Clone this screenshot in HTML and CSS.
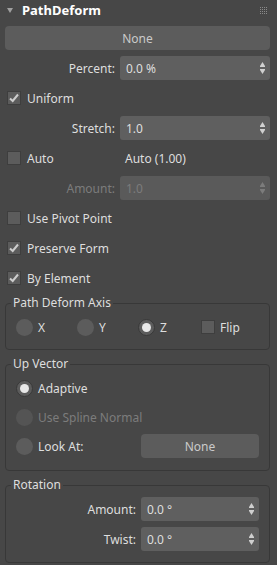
FILE: index.html
```html
<!DOCTYPE html>
<html lang="en">

<head>
    <meta charset="UTF-8">
    <meta name="viewport" content="width=device-width, initial-scale=1.0">
    <title>PathDeform</title>
    <link rel="stylesheet" href="styles.css">
</head>

<body>
    <div class="rollout">
        <div class="rollout-head">
            <span class="caret"></span>
            <span class="rollout-title">PathDeform</span>
            <svg class="grip" width="7" height="7" viewBox="0 0 7 7">
                <defs>
                    <pattern id="dots" width="2" height="2" patternUnits="userSpaceOnUse">
                        <rect width="1" height="1" fill="#8a8a8a"/>
                    </pattern>
                </defs>
                <rect width="7" height="7" fill="url(#dots)"/>
            </svg>
        </div>

        <div class="rollout-body">
            <div class="btn">None</div>

            <div class="field-row">
                <span class="label">Percent:</span>
                <div class="spinner">
                    <span class="value">0.0 %</span>
                    <svg class="arrows" width="5" height="12" viewBox="0 0 5 12"><path d="M2.5 0L5 4V5H0V4Z M0 7H5V8L2.5 12L0 8Z"/></svg>
                </div>
            </div>

            <div class="check-row">
                <span class="checkbox"><svg width="12" height="12" viewBox="0 0 12 12"><path d="M2 6.5L4.7 9L10 2.5"/></svg></span>
                <span>Uniform</span>
            </div>

            <div class="field-row">
                <span class="label">Stretch:</span>
                <div class="spinner">
                    <span class="value">1.0</span>
                    <svg class="arrows" width="5" height="12" viewBox="0 0 5 12"><path d="M2.5 0L5 4V5H0V4Z M0 7H5V8L2.5 12L0 8Z"/></svg>
                </div>
            </div>

            <div class="check-row">
                <div class="check-left">
                    <span class="checkbox"></span>
                    <span>Auto</span>
                </div>
                <span>Auto (1.00)</span>
            </div>

            <div class="field-row disabled">
                <span class="label">Amount:</span>
                <div class="spinner">
                    <span class="value">1.0</span>
                    <svg class="arrows" width="5" height="12" viewBox="0 0 5 12"><path d="M2.5 0L5 4V5H0V4Z M0 7H5V8L2.5 12L0 8Z"/></svg>
                </div>
            </div>

            <div class="check-row">
                <span class="checkbox"></span>
                <span>Use Pivot Point</span>
            </div>

            <div class="check-row">
                <span class="checkbox"><svg width="12" height="12" viewBox="0 0 12 12"><path d="M2 6.5L4.7 9L10 2.5"/></svg></span>
                <span>Preserve Form</span>
            </div>

            <div class="check-row">
                <span class="checkbox"><svg width="12" height="12" viewBox="0 0 12 12"><path d="M2 6.5L4.7 9L10 2.5"/></svg></span>
                <span>By Element</span>
            </div>

            <!-- Path Deform Axis -->
            <fieldset class="group">
                <legend>Path Deform Axis</legend>
                <div class="axis-row">
                    <div class="opt"><span class="radio"></span><span>X</span></div>
                    <div class="opt"><span class="radio"></span><span>Y</span></div>
                    <div class="opt"><span class="radio on"></span><span>Z</span></div>
                    <div class="opt"><span class="checkbox"></span><span>Flip</span></div>
                </div>
            </fieldset>

            <!-- Up Vector -->
            <fieldset class="group">
                <legend>Up Vector</legend>
                <div class="group-body">
                    <div class="opt row"><span class="radio on"></span><span>Adaptive</span></div>
                    <div class="opt row disabled"><span class="radio"></span><span>Use Spline Normal</span></div>
                    <div class="opt row">
                        <span class="radio"></span><span>Look At:</span>
                        <div class="btn small">None</div>
                    </div>
                </div>
            </fieldset>

            <!-- Rotation -->
            <fieldset class="group">
                <legend>Rotation</legend>
                <div class="group-body wide">
                    <div class="field-row">
                        <span class="label">Amount:</span>
                        <div class="spinner small">
                            <span class="value">0.0 °</span>
                            <svg class="arrows" width="5" height="12" viewBox="0 0 5 12"><path d="M2.5 0L5 4V5H0V4Z M0 7H5V8L2.5 12L0 8Z"/></svg>
                        </div>
                    </div>
                    <div class="field-row">
                        <span class="label">Twist:</span>
                        <div class="spinner small">
                            <span class="value">0.0 °</span>
                            <svg class="arrows" width="5" height="12" viewBox="0 0 5 12"><path d="M2.5 0L5 4V5H0V4Z M0 7H5V8L2.5 12L0 8Z"/></svg>
                        </div>
                    </div>
                </div>
            </fieldset>
        </div>
    </div>
</body>

</html>
```

FILE: styles.css
```css
body {
    margin: 0;
    background-color: #474747;
    font-family: "Noto Sans", Arial, sans-serif;
    font-size: 12px;
    color: #dedede;
}

.rollout-head {
    height: 20px;
    display: flex;
    align-items: center;
    padding: 0 10px 0 7px;
}

.caret {
    width: 0;
    height: 0;
    border-left: 3px solid transparent;
    border-right: 3px solid transparent;
    border-top: 5px solid #a0a0a0;
    margin-right: 9px;
}

.rollout-title {
    flex: 1;
    font-weight: bold;
    font-size: 13px;
    color: #ffffff;
}

.rollout-body {
    display: flex;
    flex-direction: column;
    gap: 6px;
    padding: 6px 7px 0 5px;
}

.btn {
    height: 24px;
    background-color: #5c5c5c;
    border-radius: 4px;
    display: flex;
    align-items: center;
    justify-content: center;
    color: #cacaca;
}

.btn.small {
    width: 118px;
    margin-left: auto;
}

.field-row {
    display: flex;
    align-items: center;
    height: 24px;
    gap: 5px;
}

.field-row .label {
    flex: 1;
    text-align: right;
}

.spinner {
    width: 150px;
    height: 24px;
    box-sizing: border-box;
    background-color: #5f5f5f;
    border-radius: 3px;
    display: flex;
    align-items: center;
    padding: 0 5px 0 6px;
}

.spinner.small {
    width: 118px;
}

.spinner .value {
    flex: 1;
}

.arrows {
    fill: #cfcfcf;
}

.disabled {
    color: #7c7c7c;
}

.disabled .spinner {
    background-color: #5a5a5a;
}

.disabled .arrows {
    fill: #7c7c7c;
}

.check-row {
    display: flex;
    align-items: center;
    height: 24px;
    gap: 6px;
    padding-left: 2px;
}

.check-left {
    width: 112px;
    display: flex;
    align-items: center;
    gap: 6px;
}

.checkbox {
    width: 14px;
    height: 14px;
    box-sizing: border-box;
    background-color: #5c5c5c;
    border: 1px solid #3e3e3e;
    display: flex;
    align-items: center;
    justify-content: center;
    flex-shrink: 0;
}

.checkbox path {
    fill: none;
    stroke: #cdcdcd;
    stroke-width: 2;
}

.group {
    margin: 0;
    border: 1px solid #383838;
    border-radius: 4px;
    padding: 5px 10px 10px 10px;
}

.group + .group {
    margin-top: 1px;
}

.group:last-child {
    padding-bottom: 11px;
}

.group legend {
    padding: 0 2px;
    margin-left: -5px;
    line-height: 14px;
}

.axis-row {
    display: grid;
    grid-template-columns: 61px 61px 62px auto;
    align-items: center;
    height: 24px;
}

.opt {
    display: flex;
    align-items: center;
    gap: 5px;
}

.opt .checkbox {
    margin-left: 1px;
}

.group-body {
    display: flex;
    flex-direction: column;
    gap: 5px;
    padding-bottom: 2px;
}

.group-body.wide {
    gap: 6px;
    padding-bottom: 0;
}

.group-body .row {
    height: 24px;
}

.radio {
    width: 17px;
    height: 17px;
    box-sizing: border-box;
    border-radius: 50%;
    background-color: #5c5c5c;
    flex-shrink: 0;
}

.radio.on {
    border: 1px solid #393939;
    display: flex;
    align-items: center;
    justify-content: center;
}

.radio.on::after {
    content: "";
    width: 9px;
    height: 9px;
    border-radius: 50%;
    background-color: #e8e8e8;
}

.disabled .radio {
    background-color: #545454;
}
```
